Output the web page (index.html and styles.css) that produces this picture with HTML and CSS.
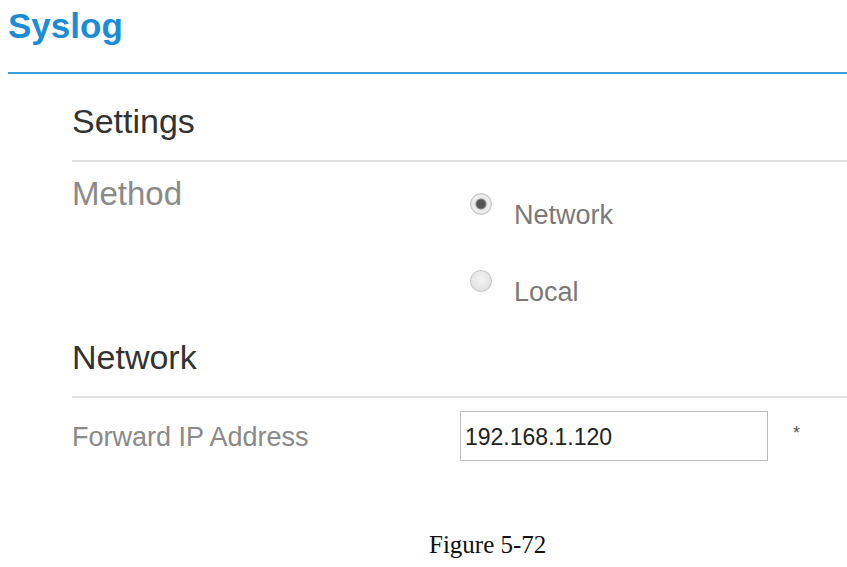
FILE: index.html
```html
<!DOCTYPE html>
<html lang="en">
<head>
    <meta charset="UTF-8">
    <meta name="viewport" content="width=device-width, initial-scale=1.0">
    <title>Syslog</title>
    <link rel="stylesheet" href="styles.css">
</head>
<body>
    <div class="page-header">
        <h1 class="page-title">Syslog</h1>
    </div>

    <div class="content">
        <h2 class="section-title">Settings</h2>
        <div class="form-row">
            <div class="row-label method-label">Method</div>
            <div class="options">
                <label class="option">
                    <input type="radio" name="method" value="network" checked>
                    <span class="option-text">Network</span>
                </label>
                <label class="option">
                    <input type="radio" name="method" value="local">
                    <span class="option-text">Local</span>
                </label>
            </div>
        </div>

        <h2 class="section-title">Network</h2>
        <div class="form-row">
            <div class="row-label field-label">Forward IP Address</div>
            <input type="text" class="text-field" value="192.168.1.120">
            <span class="required">*</span>
        </div>
    </div>

    <p class="caption">Figure 5-72</p>
</body>
</html>
```

FILE: styles.css
```css
body {
    margin: 0;
    font-family: "Liberation Sans", Arial, sans-serif;
    background: #ffffff;
    color: #333;
}

.page-header {
    height: 66px;
    padding-top: 6px;
    margin-left: 8px;
    border-bottom: 2px solid #3a9fe0;
}

.page-title {
    margin: 0;
    font-size: 35px;
    line-height: 39px;
    font-weight: bold;
    color: #1b8cd6;
}

.content {
    padding-left: 72px;
}

.section-title {
    margin: 27px 0 0 0;
    padding-bottom: 19px;
    border-bottom: 2px solid #e0e0e0;
    font-size: 34px;
    line-height: 40px;
    font-weight: normal;
    color: #333;
}

.section-title + .form-row + .section-title {
    margin-top: 30px;
}

.form-row {
    display: flex;
    align-items: flex-start;
}

.row-label {
    width: 388px;
    flex-shrink: 0;
    color: #8a8a8a;
}

.method-label {
    margin-top: 14px;
    font-size: 33px;
    line-height: 36px;
}

.options {
    display: flex;
    flex-direction: column;
    gap: 40px;
    padding-top: 31px;
}

.option {
    display: flex;
    align-items: flex-start;
}

.option input {
    appearance: none;
    -webkit-appearance: none;
    width: 22px;
    height: 22px;
    margin: 0 22px 0 10px;
    border-radius: 50%;
    border: 1px solid #c4c4c4;
    background: radial-gradient(circle at 50% 40%, #f4f4f4 0%, #e2e2e2 70%, #d4d4d4 100%);
    box-sizing: border-box;
}

.option input:checked {
    background: radial-gradient(circle, #555 0, #555 4px, #8a8a8a 5px, #e6e6e6 6px, #f0f0f0 8px, #d8d8d8 11px);
}

.option-text {
    margin-top: 7px;
    font-size: 27px;
    line-height: 30px;
    color: #7a7a7a;
}

.field-label {
    margin-top: 11px;
    font-size: 27px;
    line-height: 30px;
}

.section-title + .form-row + .section-title + .form-row {
    margin-top: 13px;
}

.text-field {
    width: 308px;
    height: 50px;
    margin: 0;
    padding: 3px 4px 0 4px;
    box-sizing: border-box;
    border: 1px solid #bdbdbd;
    font-family: "Liberation Sans", Arial, sans-serif;
    font-size: 23px;
    color: #222;
    outline: none;
}

.required {
    margin: 12px 0 0 25px;
    font-size: 18px;
    line-height: 20px;
    color: #555;
}

.caption {
    margin: 69px 0 0 0;
    padding-left: 429px;
    font-family: "Liberation Serif", "Times New Roman", serif;
    font-size: 25px;
    line-height: 30px;
    color: #111;
}
```
